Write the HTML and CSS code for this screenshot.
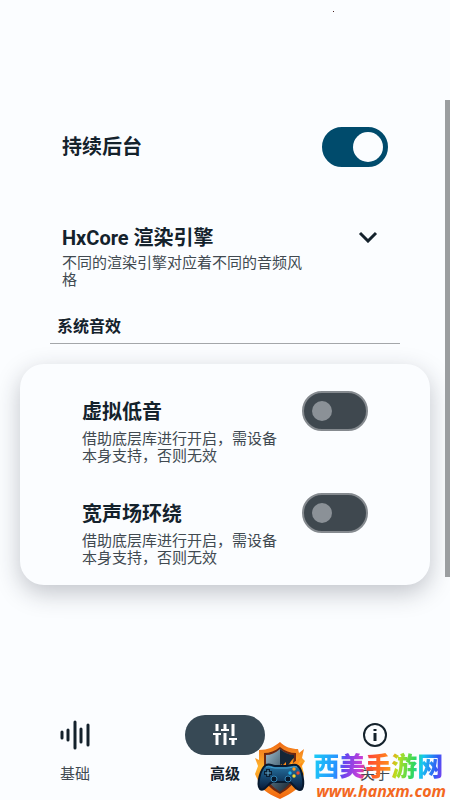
FILE: index.html
```html
<!DOCTYPE html>
<html lang="zh-CN">
<head>
    <meta charset="UTF-8">
    <meta name="viewport" content="width=device-width, initial-scale=1.0">
    <title>高级</title>
    <link rel="stylesheet" href="styles.css">
</head>
<body>

    <span class="status-dot"></span>

    <main class="content">
        <div class="row row-switch">
            <label class="title" for="keep-alive">持续后台</label>
            <input type="checkbox" class="switch" id="keep-alive" checked>
        </div>

        <div class="row row-engine">
            <div class="text">
                <h2 class="title">HxCore 渲染引擎</h2>
                <p class="desc">不同的渲染引擎对应着不同的音频风格</p>
            </div>
            <button type="button" class="expand" aria-label="展开">
                <svg width="20" height="12" viewBox="0 0 20 12" fill="none" stroke="#14222c" stroke-width="3">
                    <path d="M2 2l8 8 8-8"/>
                </svg>
            </button>
        </div>

        <h3 class="section-title">系统音效</h3>

        <section class="card">
            <div class="row">
                <div class="text">
                    <label class="title" for="bass">虚拟低音</label>
                    <p class="desc">借助底层库进行开启，需设备本身支持，否则无效</p>
                </div>
                <input type="checkbox" class="switch" id="bass">
            </div>
            <div class="row">
                <div class="text">
                    <label class="title" for="surround">宽声场环绕</label>
                    <p class="desc">借助底层库进行开启，需设备本身支持，否则无效</p>
                </div>
                <input type="checkbox" class="switch" id="surround">
            </div>
        </section>
    </main>

    <nav class="tabs">
        <a href="#basic" class="tab">
            <span class="tab-icon">
                <svg width="32" height="32" viewBox="0 0 32 32" stroke="#14222c" stroke-width="3" stroke-linecap="round">
                    <path d="M3 13v6M9 11v10M16 3v26M22 10v13M29 6v20"/>
                </svg>
            </span>
            基础
        </a>
        <a href="#advanced" class="tab active">
            <span class="tab-icon">
                <svg width="24" height="24" viewBox="0 0 24 24" fill="none" stroke="#fff">
                    <path d="M4 1v7M4 10v12M12 1v6M12 10v12M20 1v12M20 16v6" stroke-width="3"/>
                    <path d="M0 11h8M8 7h8M16 16h8" stroke-width="2"/>
                </svg>
            </span>
            高级
        </a>
        <a href="#about" class="tab">
            <span class="tab-icon">
                <svg width="26" height="26" viewBox="0 0 26 26" fill="none" stroke="#14222c" stroke-width="2">
                    <circle cx="13" cy="13" r="11"/>
                    <path d="M13 11v8M13 7v2" stroke-width="3"/>
                </svg>
            </span>
            关于
        </a>
    </nav>

    <div class="scrollbar"></div>

    <div class="watermark">
        <svg class="shield" width="52" height="58" viewBox="0 0 52 58">
            <defs>
                <linearGradient id="fire" x1="0" y1="0" x2="0" y2="1">
                    <stop offset="0" stop-color="#ef6a16"/>
                    <stop offset=".45" stop-color="#ffb52e"/>
                    <stop offset="1" stop-color="#f0640f"/>
                </linearGradient>
                <linearGradient id="steel" x1="0" y1="0" x2="1" y2="1">
                    <stop offset="0" stop-color="#9dbccd"/>
                    <stop offset=".5" stop-color="#486272"/>
                    <stop offset="1" stop-color="#101a26"/>
                </linearGradient>
                <linearGradient id="pad" x1="0" y1="0" x2="0" y2="1">
                    <stop offset="0" stop-color="#2877a6"/>
                    <stop offset=".5" stop-color="#164871"/>
                    <stop offset="1" stop-color="#091a36"/>
                </linearGradient>
            </defs>
            <path d="M26 0c5 5 11 7 18 7l1 4 5-4-2 9 3 3-3 5 2 8-4 11C42 49 34 53 26 57 17 53 9 49 6 43L1 32l3-8-3-8 4 2V8c9 0 15-3 21-8z" fill="url(#fire)"/>
            <path d="M26 5c5 4 10 6 16 6v19c0 12-8 17-16 22C17 47 10 42 10 30V11c6 0 11-2 16-6z" fill="#6d2710"/>
            <path d="M26 7c5 4 9 6 14 6v16c0 11-7 16-14 21-7-5-14-10-14-21V13c5 0 9-2 14-6z" fill="url(#steel)"/>
            <path d="M26 7c5 4 9 6 14 6v16H26z" fill="#142637"/>
            <path d="M21 28c4-1 3-4 7-6l-1 3 5-5v4c4-1 4-5 8-8l-1 5 8-6-3 8 5-3-4 12H22z" fill="#ff8c16"/>
            <path d="M28 28l5-4-1 3 6-6v5l5-4-2 7z" fill="#ffdc52"/>
            <path d="M12 23c4-2 6 1 9 1h11c4 0 8-3 12 0 4 3 7 18 4 23-4 4-9-5-12-7H18c-4 2-8 10-12 7-4-5 1-21 6-24z" fill="url(#pad)" stroke="#07192e" stroke-width="2"/>
            <path d="M12 25c4-1 6 1 9 1h12c4 0 7-2 10-1" fill="none" stroke="#46a7d6"/>
            <path d="M14 27v8M10 31h8" stroke="#0a1d31" stroke-width="4"/>
            <path d="M14 28v6M11 31h6" stroke="#62a8cc"/>
            <circle cx="20" cy="37" r="3" fill="#08182b" stroke="#3184b5"/>
            <circle cx="34" cy="37" r="3" fill="#08182b" stroke="#3184b5"/>
            <circle cx="40" cy="27" r="1.7" fill="#ff9f22"/>
            <circle cx="44" cy="31" r="1.7" fill="#f04a2c"/>
            <circle cx="36" cy="31" r="1.7" fill="#23b4e9"/>
            <circle cx="40" cy="34" r="1.7" fill="#f6d831"/>
        </svg>
        <div class="brand">
            <span class="brand-name">西美手游网</span>
            <span class="brand-url">www.hanxm.com</span>
        </div>
    </div>

</body>
</html>
```

FILE: styles.css
```css
* {
    box-sizing: border-box;
}

body {
    position: relative;
    display: flex;
    flex-direction: column;
    min-height: 100vh;
    margin: 0;
    background: #fbfdff;
    color: #14222c;
    font-family: Roboto, "Noto Sans CJK SC", sans-serif;
}

h2, h3, p {
    margin: 0;
}

.content {
    flex: 1;
    padding: 127px 20px 0;
}

.row {
    display: flex;
    justify-content: space-between;
    align-items: flex-start;
}

.row-switch {
    align-items: center;
    padding: 0 42px;
}

.row-engine {
    padding: 57px 52px 0 42px;
}

.text {
    width: 248px;
}

.title {
    display: block;
    font-size: 20px;
    font-weight: 700;
    line-height: 28px;
}

.desc {
    margin-top: 3px;
    color: #414a51;
    font-size: 15px;
    line-height: 17px;
}

.expand {
    display: flex;
    padding: 7px 0;
    border: 0;
    background: none;
}

.section-title {
    margin: 24px 30px 20px;
    padding: 0 7px 2px;
    border-bottom: 1px solid #a4a7aa;
    font-size: 16px;
    line-height: 28px;
}

.card {
    display: flex;
    flex-direction: column;
    gap: 35px;
    padding: 34px 62px 18px;
    border-radius: 24px;
    background: #fbfdff;
    box-shadow: 0 8px 24px rgba(30, 35, 50, 0.26);
}

.card .text {
    width: 200px;
}

.card .desc {
    margin-top: 5px;
}

.card .switch {
    margin-top: -7px;
}

.switch {
    appearance: none;
    display: flex;
    align-items: center;
    flex-shrink: 0;
    width: 66px;
    height: 40px;
    margin: 0;
    padding: 0 8px;
    border: 2px solid #858a8f;
    border-radius: 20px;
    background: #3f484f;
}

.switch::before {
    content: "";
    width: 20px;
    height: 20px;
    border-radius: 50%;
    background: #8b9197;
}

.switch:checked {
    justify-content: flex-end;
    padding: 0 3px;
    border-color: #004b6c;
    background: #004b6c;
}

.switch:checked::before {
    width: 30px;
    height: 30px;
    background: #fbfdff;
}

.tabs {
    display: flex;
    padding-bottom: 14px;
}

.tab {
    display: flex;
    flex: 1;
    flex-direction: column;
    align-items: center;
    gap: 8px;
    color: #414a51;
    font-size: 15px;
    line-height: 23px;
    text-decoration: none;
}

.tab-icon {
    display: flex;
    justify-content: center;
    align-items: center;
    width: 80px;
    height: 40px;
    border-radius: 20px;
}

.active {
    color: #14222c;
    font-weight: 700;
}

.active .tab-icon {
    background: #374955;
}

.status-dot {
    position: absolute;
    top: 11px;
    left: 333px;
    width: 1px;
    height: 1px;
    background: #4a2020;
}

.scrollbar {
    position: absolute;
    top: 100px;
    right: 0;
    width: 5px;
    height: 477px;
    background: #9b9ea0;
}

.watermark {
    position: absolute;
    right: 4px;
    bottom: 0;
    display: flex;
    align-items: flex-end;
    gap: 7px;
}

.brand {
    display: flex;
    flex-direction: column;
    align-items: flex-start;
}

.brand-name {
    background: linear-gradient(100deg, #19d0f5 0%, #2792ff 19%, #6a44ee 25%, #c83ed8 37%, #ff4b35 43%, #ff8a18 57%, #b9df20 64%, #32d85c 76%, #16c9ef 82%, #305cf5 93%, #8b36ee 100%);
    background-clip: text;
    color: transparent;
    font-size: 26px;
    font-weight: 900;
    line-height: 30px;
}

.brand-url {
    padding-left: 3px;
    color: #f3681f;
    font-family: "Noto Sans", sans-serif;
    font-size: 16px;
    font-style: italic;
    font-weight: 700;
    line-height: 18px;
}
```
